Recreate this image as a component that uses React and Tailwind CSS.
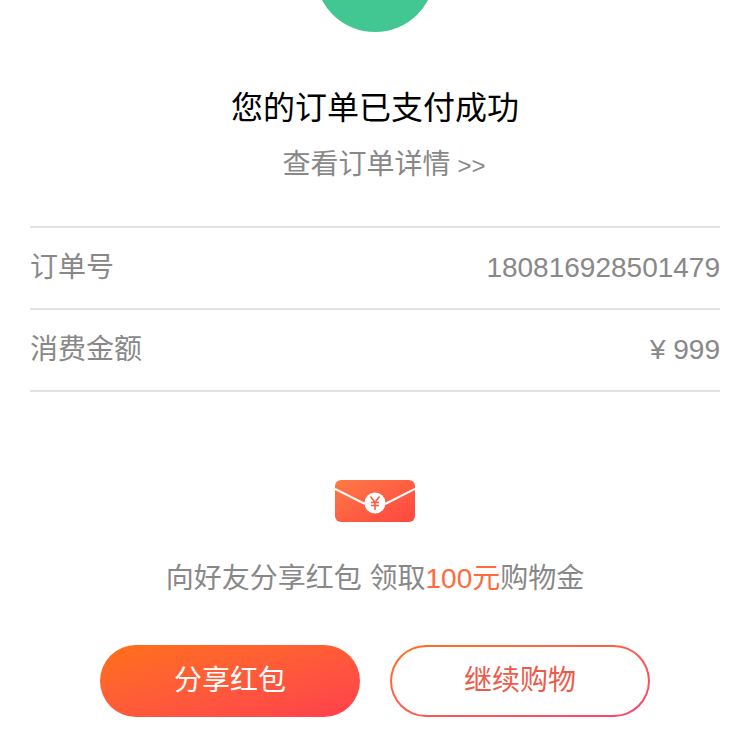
import React from "react";

const font = "font-['Liberation_Sans','Noto_Sans_CJK_SC',sans-serif]";

const Row = ({ label, value }) => (
  <div className="flex h-[82px] items-center justify-between border-b-2 border-[#e2e2e2] text-[28px] text-[#888888]">
    <span>{label}</span>
    <span>{value}</span>
  </div>
);

const Envelope = () => (
  <svg width="80" height="42" viewBox="0 0 80 42">
    <defs>
      <linearGradient id="env" x1="0" y1="0" x2="1" y2="1">
        <stop offset="0" stopColor="#ff7a45" />
        <stop offset="1" stopColor="#ff4540" />
      </linearGradient>
    </defs>
    <rect width="80" height="42" rx="6" fill="url(#env)" />
    <path d="M0 9 L30 24 M80 9 L50 24" stroke="#fff" strokeWidth="2" fill="none" />
    <circle cx="40" cy="23" r="10.5" fill="#fff" />
    <path
      d="M35.5 16.5 L40 22.5 L44.5 16.5 M36 22.5 H44 M36 25.5 H44 M40 22.5 V30"
      stroke="#ff5a42"
      strokeWidth="1.6"
      fill="none"
    />
  </svg>
);

export default function App() {
  return (
    <div className={`${font} h-[750px] w-[750px] overflow-hidden bg-white`}>
      <div className="mx-auto -mt-[88px] flex h-[120px] w-[120px] items-center justify-center rounded-full bg-[#43c792]">
        <svg width="60" height="60" viewBox="0 0 60 60">
          <path
            d="M8 20 L24 37 L54 6"
            stroke="#fff"
            strokeWidth="7"
            strokeLinecap="round"
            strokeLinejoin="round"
            fill="none"
          />
        </svg>
      </div>

      <h1 className="mt-[52px] text-center text-[32px] leading-[48px] font-normal text-black">
        您的订单已支付成功
      </h1>
      <div className="mt-[13px] flex items-baseline justify-center pl-[18px] text-[28px] leading-[40px] text-[#888888]">
        查看订单详情
        <span className="ml-[7px] text-[24px]">&gt;&gt;</span>
      </div>

      <div className="mx-[30px] mt-[40px] border-t-2 border-[#e2e2e2]">
        <Row label="订单号" value="180816928501479" />
        <Row label="消费金额" value="¥ 999" />
      </div>

      <div className="mt-[88px] flex justify-center">
        <Envelope />
      </div>

      <p className="mt-[37px] text-center text-[28px] leading-[40px] text-[#888888]">
        向好友分享红包 领取<span className="text-[#ff6a3c]">100元</span>购物金
      </p>

      <div className="mt-[46px] flex justify-center gap-[30px]">
        <button className="h-[72px] w-[260px] rounded-full bg-gradient-to-br from-[#ff7014] to-[#ff3f4c] text-[28px] text-white">
          分享红包
        </button>
        <div className="h-[72px] w-[260px] rounded-full bg-gradient-to-br from-[#ff7014] to-[#ff3f6c] p-[2px]">
          <button className="h-full w-full rounded-full bg-white text-[28px] text-[#ee5a4a]">
            继续购物
          </button>
        </div>
      </div>
    </div>
  );
}
